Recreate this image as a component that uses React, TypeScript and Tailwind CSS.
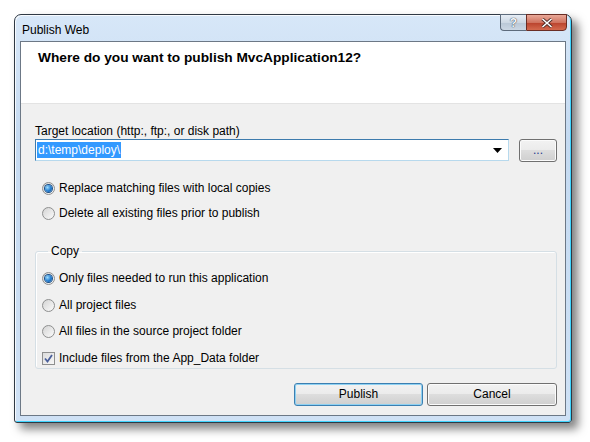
import React from "react";

const font = { fontFamily: '"Liberation Sans", Arial, sans-serif' };

function Radio({ checked, label }: { checked?: boolean; label: string }) {
  return (
    <label className="flex items-center h-4 gap-[4px] text-[12px] text-black">
      <span className="relative w-[13px] h-[13px] rounded-full border border-[#8e8f8f] bg-gradient-to-br from-[#d4d4d4] to-[#fbfbfb] flex items-center justify-center">
        {checked && (
          <span className="w-[7px] h-[7px] rounded-full bg-[radial-gradient(circle_at_35%_35%,#9fdcfb,#1f7bd1_55%,#14508f)] shadow-[0_0_0_1px_#1b4f86]" />
        )}
      </span>
      <span>{label}</span>
    </label>
  );
}

function Checkbox({ checked, label }: { checked?: boolean; label: string }) {
  return (
    <label className="flex items-center h-4 gap-[4px] text-[12px] text-black">
      <span className="w-[13px] h-[13px] border border-[#8e8f8f] bg-gradient-to-br from-[#dcdcdc] to-[#f7f7f7] flex items-center justify-center">
        {checked && (
          <svg width="9" height="9" viewBox="0 0 9 9">
            <path d="M1 4.5 L3.5 7.5 L8 1" fill="none" stroke="#4a5f9a" strokeWidth="1.8" />
          </svg>
        )}
      </span>
      <span>{label}</span>
    </label>
  );
}

function Button({ children, primary }: { children: React.ReactNode; primary?: boolean }) {
  return (
    <button
      className={
        "h-[23px] rounded-[3px] border text-[12px] text-black bg-[linear-gradient(#f2f2f2_0%,#ebebeb_48%,#dddddd_50%,#cfcfcf_100%)] " +
        (primary
          ? "border-[#3c7fb1] shadow-[inset_0_0_0_1px_#8ed1f2]"
          : "border-[#707070] shadow-[inset_0_0_0_1px_#fbfbfb]")
      }
    >
      {children}
    </button>
  );
}

export default function App() {
  return (
    <div className="w-[590px] h-[442px] bg-white pl-[14px] pt-[14px]" style={font}>
      <div className="w-[558px] h-[409px] flex flex-col rounded-t-[7px] rounded-b-[3px] border border-[#2f3944] bg-[linear-gradient(#d7e7f8,#c5daf1_30%,#cfe1f5)] shadow-[inset_-1px_-1px_0_#3fd6ff,inset_1px_1px_0_rgba(255,255,255,0.8),6px_6px_10px_rgba(0,0,0,0.5)] px-[5px] pb-[6px]">
        {/* title bar */}
        <div className="h-[26px] flex items-start justify-between">
          <span className="mt-[6px] ml-[2px] text-[12px] text-black">Publish Web</span>
          <div className="flex -mt-px -mr-[1px]">
            <div className="w-[26px] h-[17px] rounded-bl-[4px] border border-[#5d6b7c] border-r-0 bg-[linear-gradient(#e6edf5,#cdd8e4_50%,#b9c7d6_51%,#cbd7e4)] flex items-center justify-center text-[12px] font-bold text-[#f3f6f9] [text-shadow:0_0_1px_#3c4654,0_0_1px_#3c4654]">
              ?
            </div>
            <div className="w-[41px] h-[17px] rounded-br-[4px] border border-[#6a2d24] bg-[linear-gradient(#e9a898,#d0735f_50%,#b9412c_51%,#d46a4e)] flex items-center justify-center">
              <svg width="12" height="10" viewBox="0 0 12 10">
                <path d="M1.5 1 L10.5 9 M10.5 1 L1.5 9" stroke="#4a2a24" strokeWidth="3.2" />
                <path d="M1.5 1 L10.5 9 M10.5 1 L1.5 9" stroke="#ffffff" strokeWidth="1.6" />
              </svg>
            </div>
          </div>
        </div>

        {/* client */}
        <div className="flex-1 flex flex-col border border-[#6c7886] bg-[#f0f0f0]">
          <div className="h-[62px] bg-white border-b border-[#e3e3e3] pl-[17px] pt-[8px]">
            <h1 className="text-[13.7px] leading-4 font-bold text-black">
              Where do you want to publish MvcApplication12?
            </h1>
          </div>

          <div className="flex-1 flex flex-col pl-[14px] pr-[8px] pt-[19px]">
            <div className="h-4 text-[12px] leading-4 text-black">Target location (http:, ftp:, or disk path)</div>
            <div className="-mt-px flex items-center gap-[10px] h-6">
              <div className="flex-1 h-[22px] flex items-center border border-[#3d7bad] border-b-[#b7d9ed] border-r-[#b7d9ed] bg-white pl-px pr-[6px]">
                <span className="bg-[#3399ff] text-white text-[12px] leading-4 px-px">d:\temp\deploy\</span>
                <span className="flex-1" />
                <svg width="9" height="5" viewBox="0 0 9 5">
                  <path d="M0 0 H9 L4.5 5 Z" fill="#000" />
                </svg>
              </div>
              <Button>
                <span className="block w-[36px] leading-3 text-[#2a3b8f]">...</span>
              </Button>
            </div>

            <div className="mt-[18px] pl-[7px]">
              <Radio checked label="Replace matching files with local copies" />
            </div>
            <div className="mt-[9px] pl-[7px]">
              <Radio label="Delete all existing files prior to publish" />
            </div>

            <fieldset className="mt-[22px] border border-[#d5dfe5] rounded-[3px] shadow-[inset_1px_1px_0_#ffffff] pl-[6px] pb-[2px]">
              <legend className="ml-[6px] px-[3px] h-4 text-[12px] leading-4 text-black">Copy</legend>
              <div className="pt-[11px] flex flex-col">
                <Radio checked label="Only files needed to run this application" />
                <div className="mt-[11px]">
                  <Radio label="All project files" />
                </div>
                <div className="mt-[10px]">
                  <Radio label="All files in the source project folder" />
                </div>
                <div className="mt-[11px]">
                  <Checkbox checked label="Include files from the App_Data folder" />
                </div>
              </div>
            </fieldset>

            <div className="mt-[12px] flex justify-end gap-[4px]">
              <div className="w-[129px]">
                <Button primary>
                  <span className="block w-[127px]">Publish</span>
                </Button>
              </div>
              <div className="w-[130px]">
                <Button>
                  <span className="block w-[128px]">Cancel</span>
                </Button>
              </div>
            </div>
          </div>
        </div>
      </div>
    </div>
  );
}
